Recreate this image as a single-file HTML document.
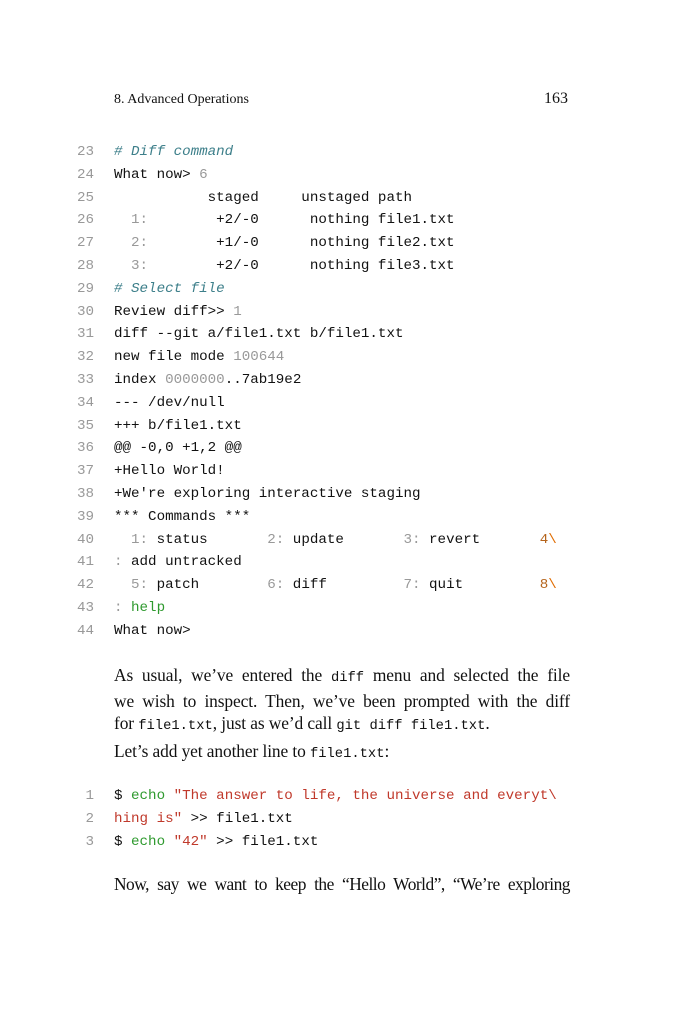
<!DOCTYPE html>
<html><head><meta charset="utf-8"><style>
body{margin:0;width:683px;height:1024px;background:#fff;position:relative;overflow:hidden;font-family:"Liberation Serif",serif;color:#111}
.h{position:absolute;top:92px;font-size:14px}
pre{position:absolute;margin:0;font-family:"Liberation Mono",monospace;font-size:14.2px;line-height:22.8px;color:#111}
.n{position:absolute;left:60px;width:34px;text-align:right;color:#999}
.c{color:#3d7f8a;font-style:italic}.g{color:#999}.gr{color:#2f9a2f}.r{color:#c0392b}.o{color:#b5651d}.og{color:#e06c00}
.p{position:absolute;left:114px;width:456px;font-size:17.4px;line-height:22px;margin:0;letter-spacing:-0.1px}
.p div{white-space:nowrap;text-align:justify;text-align-last:justify}
.p div.l{text-align-last:left}
.p code{font-family:"Liberation Mono",monospace;font-size:13.8px;letter-spacing:0}
</style></head><body>
<div class="h" style="left:114px">8. Advanced Operations</div>
<div class="h" style="left:544px;font-size:16px;top:90px">163</div>
<pre class="n" style="top:141px">23
24
25
26
27
28
29
30
31
32
33
34
35
36
37
38
39
40
41
42
43
44</pre>
<pre style="left:114px;top:141px"><span class="c"># Diff command</span>
What now&gt; <span class="g">6</span>
           staged     unstaged path
  <span class="g">1:</span>        +2/-0      nothing file1.txt
  <span class="g">2:</span>        +1/-0      nothing file2.txt
  <span class="g">3:</span>        +2/-0      nothing file3.txt
<span class="c"># Select file</span>
Review diff&gt;&gt; <span class="g">1</span>
diff --git a/file1.txt b/file1.txt
new file mode <span class="g">100644</span>
index <span class="g">0000000</span>..7ab19e2
--- /dev/null
+++ b/file1.txt
@@ -0,0 +1,2 @@
+Hello World!
+We're exploring interactive staging
*** Commands ***
  <span class="g">1:</span> status       <span class="g">2:</span> update       <span class="g">3:</span> revert       <span class="o">4</span><span class="og">\</span>
<span class="g">:</span> add untracked
  <span class="g">5:</span> patch        <span class="g">6:</span> diff         <span class="g">7:</span> quit         <span class="o">8</span><span class="og">\</span>
<span class="g">:</span> <span class="gr">help</span>
What now&gt;</pre>
<div class="p" style="top:664px">
<div>As usual, we’ve entered the <code>diff</code> menu and selected the file</div>
<div>we wish to inspect. Then, we’ve been prompted with the diff</div>
<div class="l">for <code>file1.txt</code>, just as we’d call <code>git diff file1.txt</code>.</div>
</div>
<div class="p" style="top:740px"><div class="l">Let’s add yet another line to <code>file1.txt</code>:</div></div>
<pre class="n" style="top:785px">1
2
3</pre>
<pre style="left:114px;top:785px">$ <span class="gr">echo</span> <span class="r">"The answer to life, the universe and everyt\</span>
<span class="r">hing is"</span> &gt;&gt; file1.txt
$ <span class="gr">echo</span> <span class="r">"42"</span> &gt;&gt; file1.txt</pre>
<div class="p" style="top:873px;letter-spacing:-0.5px"><div>Now, say we want to keep the “Hello World”, “We’re exploring</div></div>
</body></html>
